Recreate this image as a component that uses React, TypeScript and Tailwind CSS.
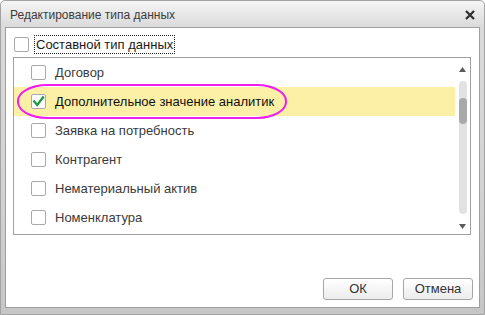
import { useState } from "react"

const items = [
  "Договор",
  "Дополнительное значение аналитик",
  "Заявка на потребность",
  "Контрагент",
  "Нематериальный актив",
  "Номенклатура",
]

function Box({ checked }: { checked?: boolean }) {
  return (
    <div className="w-[15px] h-[15px] shrink-0 border border-[#a9a9a9] rounded-[2px] bg-white flex items-center justify-center">
      {checked && (
        <svg width="13" height="13" viewBox="0 0 13 13">
          <path d="M2.2 6.4 L5.2 10 L11 2.4" fill="none" stroke="#1c9a44" strokeWidth="2.3" strokeLinecap="square" />
        </svg>
      )}
    </div>
  )
}

function App() {
  const [selected] = useState(1)

  return (
    <div className="w-[485px] h-[315px] flex flex-col rounded-t-[5px] border border-[#a3a3a3] bg-[linear-gradient(to_bottom,#f5f5f5_0px,#dadada_26px,#d2d2d2_60%,#c6c6c6_100%)] font-['Liberation_Sans',Arial,sans-serif]">
      {/* title */}
      <div className="h-[26px] shrink-0 flex items-center justify-between pl-[9px] pr-[9px]">
        <span className="text-[12px] text-[#3c3c3c] leading-none mt-[2px]">Редактирование типа данных</span>
        <svg width="10" height="10" viewBox="0 0 10 10" className="mt-[2px]">
          <path d="M1 1 L9 9 M9 1 L1 9" stroke="#2e2e2e" strokeWidth="2.2" />
        </svg>
      </div>

      <div className="relative flex-1 mx-[4px] mb-[6px] bg-white border border-[#9f9f9f] flex flex-col">
        {/* composite */}
        <div className="mt-[7px] h-[19px] flex items-center pl-[8px]">
          <Box />
          <span className="ml-[5px] h-[19px] px-[1px] border border-dotted border-[#222] text-[13px] leading-[17px] text-[#1a1a1a]">
            Составной тип данных
          </span>
        </div>

        {/* list */}
        <div className="mt-[3px] ml-[7px] w-[458px] h-[178px] border border-[#a0a0a0] flex">
          <div className="w-[441px] flex flex-col">
            {items.map((t, i) => (
              <div
                key={t}
                className={`h-[29px] shrink-0 flex items-center pl-[17px] ${i === selected ? "bg-[#fcf0a6]" : ""}`}
              >
                <Box checked={i === selected} />
                <span className={`ml-[9px] text-[13px] ${i === selected ? "text-[#111]" : "text-[#3a3a3a]"}`}>{t}</span>
              </div>
            ))}
          </div>
          <div className="flex-1 flex flex-col items-center pt-[9px]">
            <svg width="7" height="5" viewBox="0 0 7 5">
              <path d="M0 5 L3.5 0 L7 5 Z" fill="#5a5a5a" />
            </svg>
            <div className="mt-[9px] w-[8px] h-[133px] rounded-[4px] bg-[#e2e2e2] pt-[17px]">
              <div className="h-[26px] rounded-[4px] bg-[#a9a9a9]" />
            </div>
            <svg width="7" height="5" viewBox="0 0 7 5" className="mt-[10px]">
              <path d="M0 0 L7 0 L3.5 5 Z" fill="#5a5a5a" />
            </svg>
          </div>
        </div>

        {/* footer */}
        <div className="flex-1 flex items-end justify-end gap-[10px] pr-[6px] pb-[7px]">
          <button className="w-[70px] h-[22px] rounded-[3px] border border-[#a6a6a6] bg-[linear-gradient(to_bottom,#ffffff,#ececec)] text-[13px] text-[#333]">
            ОК
          </button>
          <button className="w-[70px] h-[22px] rounded-[3px] border border-[#a6a6a6] bg-[linear-gradient(to_bottom,#ffffff,#ececec)] text-[13px] text-[#333]">
            Отмена
          </button>
        </div>

        {/* highlight mark */}
        <div className="absolute left-[11px] top-[56px] w-[270px] h-[35px] border-2 border-[#f01cf0] rounded-[30px/17px] pointer-events-none" />
      </div>
    </div>
  )
}

export default App
